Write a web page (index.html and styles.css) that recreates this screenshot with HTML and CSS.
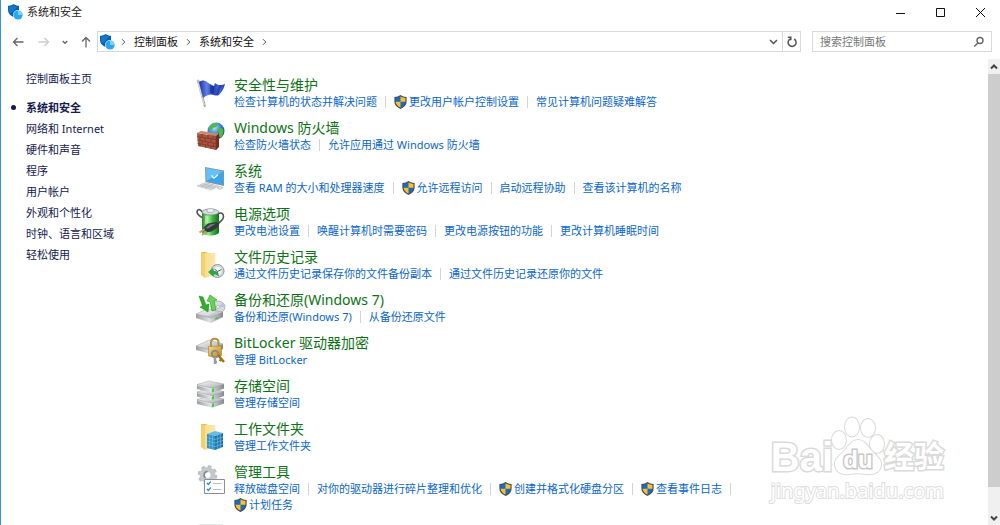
FILE: index.html
```html
<!DOCTYPE html>
<html lang="zh-CN">
<head>
<meta charset="utf-8">
<title>系统和安全</title>
<link rel="stylesheet" href="styles.css">
</head>
<body>
<svg class="defs" aria-hidden="true">
  <defs>
    <linearGradient id="gBlue" x1="0" y1="0" x2="1" y2="0"><stop offset="0" stop-color="#1c2fa0"/><stop offset=".3" stop-color="#5d80ea"/><stop offset=".55" stop-color="#2440b8"/><stop offset=".8" stop-color="#4a6fe0"/><stop offset="1" stop-color="#2337a0"/></linearGradient>
    <linearGradient id="gMetal" x1="0" y1="0" x2="1" y2="1"><stop offset="0" stop-color="#fafafa"/><stop offset=".5" stop-color="#d0d2d4"/><stop offset="1" stop-color="#a0a3a6"/></linearGradient>
    <linearGradient id="gSide" x1="0" y1="0" x2="1" y2="0"><stop offset="0" stop-color="#9c9fa2"/><stop offset=".5" stop-color="#dfe1e3"/><stop offset="1" stop-color="#85878a"/></linearGradient>
    <linearGradient id="gGreen" x1="0" y1="0" x2="1" y2="0"><stop offset="0" stop-color="#1e8a28"/><stop offset=".35" stop-color="#9bec8d"/><stop offset=".65" stop-color="#37b03e"/><stop offset="1" stop-color="#146d1d"/></linearGradient>
    <linearGradient id="gFolder" x1="0" y1="0" x2="1" y2="0"><stop offset="0" stop-color="#f9dc88"/><stop offset="1" stop-color="#fbe9b4"/></linearGradient>
    <linearGradient id="gGold" x1="0" y1="0" x2="1" y2="1"><stop offset="0" stop-color="#f6dc8a"/><stop offset="1" stop-color="#b98418"/></linearGradient>
    <radialGradient id="gGlobe" cx=".4" cy=".3" r=".7"><stop offset="0" stop-color="#b5e4ff"/><stop offset=".5" stop-color="#3a8ee0"/><stop offset="1" stop-color="#123f99"/></radialGradient>
    <symbol id="shield" viewBox="0 0 14 15">
      <path fill="#4a5056" d="M7 0C5 1.3 3 2 .4 2.1V7c0 3.7 2.6 6.3 6.6 8 4-1.7 6.600-4.300 6.600-8V2.100C11 2 9 1.300 7 0z"/>
      <path fill="#0f6fd0" d="M7 1.500C5.300 2.500 3.600 3 1.700 3.200v4.100H7zM7 7.300v6.200c3.100-1.400 5-3.400 5.300-6.200z"/>
      <path fill="#ffc02e" d="M7 1.500c1.700 1 3.400 1.500 5.300 1.700v4.100H7zM7 7.300v6.200c-3.100-1.400-5-3.400-5.300-6.200z"/>
    </symbol>
    <symbol id="security" viewBox="0 0 15 16">
      <path fill="#0a5fae" d="M5.500 0C4 1.200 2.200 1.700 0 1.800V6c0 3.200 2.200 5.600 5.500 7C8.800 11.600 11 9.200 11 6V1.800C8.800 1.700 7 1.200 5.500 0z"/>
      <path fill="#1676c9" d="M5.500 1.200C4.200 2.100 2.700 2.600 1 2.700V6c0 1.500.6 2.900 1.700 4L9.300 2.600C7.900 2.400 6.600 2 5.500 1.200z"/>
      <circle cx="10" cy="11" r="5" fill="#fff"/>
      <circle cx="10" cy="11" r="4.600" fill="#28a8ee"/>
      <path fill="#7bd0fa" d="M10 11V6.400a4.600 4.600 0 0 1 4.600 4.600z"/>
    </symbol>
    <symbol id="disk" viewBox="0 0 30 13">
      <path fill="url(#gSide)" d="M1 4.500v4.500l16 4 12-4.500V4z"/>
      <path fill="url(#gMetal)" stroke="#9a9da0" stroke-width=".5" d="M1 4.500 13 .8l16 3.200-12 4.500z"/>
      <path fill="#2fd02f" d="m16.500 9 2-.7v3.400l-2 .7z"/>
      <path stroke="#f5f5f5" stroke-width=".6" d="m1.500 5.300 15.500 4"/>
    </symbol>
  </defs>
</svg>

<div class="window">
  <header class="titlebar">
    <svg class="app-icon" aria-hidden="true"><use href="#security"/></svg>
    <h1 class="window-title">系统和安全</h1>
    <div class="window-controls">
      <button type="button" aria-label="最小化"><svg width="11" height="11"><path d="M1 6.500h9"/></svg></button>
      <button type="button" aria-label="最大化"><svg width="11" height="11"><path d="M1.500 1.500h8v8h-8z"/></svg></button>
      <button type="button" aria-label="关闭"><svg width="11" height="11"><path d="m1 1 9 9M10 1 1 10"/></svg></button>
    </div>
  </header>

  <nav class="toolbar" aria-label="地址栏">
    <div class="history">
      <button type="button" aria-label="后退"><svg width="12" height="12"><path d="M11.500 6H1.500M5.500 2l-4 4 4 4"/></svg></button>
      <button type="button" aria-label="前进" disabled><svg width="12" height="12"><path d="M.5 6h10M6.500 2l4 4-4 4"/></svg></button>
      <button type="button" class="recent" aria-label="最近的位置"><svg width="6" height="12"><path d="m.7 5 2.300 2.300L5.300 5"/></svg></button>
      <button type="button" aria-label="上移"><svg width="12" height="12"><path d="M6 11.500v-10M2 5.500l4-4 4 4"/></svg></button>
    </div>
    <div class="address">
      <svg class="app-icon" aria-hidden="true"><use href="#security"/></svg>
      <svg class="crumb-arrow" width="5" height="8"><path d="m1 1.200 2.800 2.800L1 6.800"/></svg>
      <a href="#">控制面板</a>
      <svg class="crumb-arrow" width="5" height="8"><path d="m1 1.200 2.800 2.800L1 6.800"/></svg>
      <a href="#">系统和安全</a>
      <svg class="crumb-arrow" width="5" height="8"><path d="m1 1.200 2.800 2.800L1 6.800"/></svg>
      <button type="button" class="drop" aria-label="以前的位置"><svg width="9" height="8"><path d="m1 2 3.500 3.500L8 2"/></svg></button>
      <button type="button" class="refresh" aria-label="刷新"><svg width="12" height="12"><path d="M8.200 3A4 4 0 1 1 4 3M1.800 1.300h3v3"/></svg></button>
    </div>
    <label class="search">
      <input type="text" placeholder="搜索控制面板" aria-label="搜索控制面板">
      <svg width="12" height="12"><circle cx="7" cy="4.500" r="3"/><path d="M4.900 6.900 1.200 10.600"/></svg>
    </label>
  </nav>

  <div class="body">
    <aside class="sidebar">
      <a class="home" href="#">控制面板主页</a>
      <ul>
        <li class="current"><a href="#">系统和安全</a></li>
        <li><a href="#">网络和 Internet</a></li>
        <li><a href="#">硬件和声音</a></li>
        <li><a href="#">程序</a></li>
        <li><a href="#">用户帐户</a></li>
        <li><a href="#">外观和个性化</a></li>
        <li><a href="#">时钟、语言和区域</a></li>
        <li><a href="#">轻松使用</a></li>
      </ul>
    </aside>

    <main class="content">
      <section class="item">
        <svg class="icon" viewBox="0 0 30 32" aria-hidden="true">
          <path stroke="#a7aaae" stroke-width="2.200" stroke-linecap="round" d="m2.300 5 6.500 24"/>
          <path stroke="#eceef0" stroke-width=".8" d="m2.200 6 6 22"/>
          <circle cx="2.200" cy="4" r="1.500" fill="#b9bcc0"/>
          <path fill="url(#gBlue)" d="M3 5c3-2 5-2 8 0s5 4 7 4l1-3c2 2 6 3 10 1-1 4-3 8-6 11-3 1.500-5-.5-8-.5s-5 1.500-8 3.500z"/>
          <path fill="#172783" opacity=".55" d="m14 7 4 2-1 8-3-1zM23 8l3 0-4 10h-2z"/>
        </svg>
        <div class="text">
          <h2><a href="#">安全性与维护</a></h2>
          <ul class="links">
            <li><a href="#">检查计算机的状态并解决问题</a></li>
            <li><a href="#"><svg class="shield"><use href="#shield"/></svg>更改用户帐户控制设置</a></li>
            <li><a href="#">常见计算机问题疑难解答</a></li>
          </ul>
        </div>
      </section>

      <section class="item">
        <svg class="icon" viewBox="0 0 30 32" aria-hidden="true">
          <circle cx="20" cy="11" r="8.500" fill="url(#gGlobe)"/>
          <path fill="#52b83e" d="M15 5c2-2 5-2 7-1l-2 3-3 1-2 3-2-2zM23 7l4 2c1 3 0 6-2 9l-3-3 1-3-2-2z"/>
          <path fill="#6e2d20" d="m20 15 3-2v14l-3 3z"/>
          <path fill="#a8543f" d="m1 13 19 3v14L2 26z"/>
          <path fill="#c98672" d="m1 13 4-2 18 2.500-3 2.500z"/>
          <path fill="none" stroke="#7c3728" stroke-width=".8" d="m1 16.500 19 3 3-2M1.500 20l18.500 3.500 3-2M1.700 23.300l18.300 3.700 3-2M6 14v3.200M12 15v3.200M17 15.800V19M4 17.200v3.200M9 18v3.300M15 19v3.500M6 21v3.200M12 22.200v3.300M17.500 23v3.500M4 24v2.500M9.500 25v2.700M15 26v3M20 16v14"/>
        </svg>
        <div class="text">
          <h2><a href="#">Windows 防火墙</a></h2>
          <ul class="links">
            <li><a href="#">检查防火墙状态</a></li>
            <li><a href="#">允许应用通过 Windows 防火墙</a></li>
          </ul>
        </div>
      </section>

      <section class="item">
        <svg class="icon" viewBox="0 0 30 32" aria-hidden="true">
          <path fill="#8d949a" d="m9 4 19 3.500V23L9.500 19z"/>
          <path fill="#39a5ea" d="m10 5 17.200 3.300v13.500L10.400 18z"/>
          <path fill="#64c0f5" d="m10 5 17.200 3.300L10.400 18z"/>
          <path fill="none" stroke="#fff" stroke-width="1.300" d="m15.500 12.500 2.500 2.700 4-3.700"/>
          <path fill="#d7dadd" stroke="#b3b8bc" stroke-width=".5" d="m1 23 8-3.500L23 23l-8 4z"/>
          <path fill="none" stroke="#adb2b6" stroke-width=".6" d="m4 22 14 3.500M7 21l13 3.400M5 24l8-3.700M9 25l8-3.700"/>
          <path fill="#e4e6e8" stroke="#9da3a8" stroke-width=".5" d="m21 25 3-1.500 3 1-3 2z"/>
        </svg>
        <div class="text">
          <h2><a href="#">系统</a></h2>
          <ul class="links">
            <li><a href="#">查看 RAM 的大小和处理器速度</a></li>
            <li><a href="#"><svg class="shield"><use href="#shield"/></svg>允许远程访问</a></li>
            <li><a href="#">启动远程协助</a></li>
            <li><a href="#">查看该计算机的名称</a></li>
          </ul>
        </div>
      </section>

      <section class="item">
        <svg class="icon" viewBox="0 0 30 32" aria-hidden="true">
          <path fill="none" stroke="#4c5256" stroke-width="1.600" d="M7 12C3 10 0 7 1.500 4.500S6 5 7 7M22 8c3-2 5.500-1 5.500 2.500S23 17 20 19"/>
          <path fill="url(#gGreen)" d="M6 6h17v20c0 2.200-4 3.500-8.500 3.500S6 28.200 6 26z"/>
          <ellipse cx="14.500" cy="6" rx="8.500" ry="3" fill="#d7dade" stroke="#7d8387" stroke-width=".7"/>
          <path fill="#f5f6f7" stroke="#8c9195" stroke-width=".6" d="M11 3.500v2c1 1 6 1 7 0v-2c-1-1-6-1-7 0z"/>
          <path fill="#c9eec0" opacity=".6" d="M9 9.500c1 .5 2 .7 3 .8V17l-3 1z"/>
          <path fill="#34383b" d="m7 22 5-4.500 8-1.500 3.500 1.500-2 4-6 4-5.500 1z"/>
          <path fill="#73797e" d="m9.500 22 4.500-3.500 6-1-8 5z"/>
          <path stroke="#bda366" stroke-width="1.800" d="m8.500 23-5 3.500M10.500 25.500l-4.500 3.500"/>
        </svg>
        <div class="text">
          <h2><a href="#">电源选项</a></h2>
          <ul class="links">
            <li><a href="#">更改电池设置</a></li>
            <li><a href="#">唤醒计算机时需要密码</a></li>
            <li><a href="#">更改电源按钮的功能</a></li>
            <li><a href="#">更改计算机睡眠时间</a></li>
          </ul>
        </div>
      </section>

      <section class="item">
        <svg class="icon" viewBox="0 0 30 32" aria-hidden="true">
          <path fill="#e5bd55" d="M5 3h5l2 1h7v22H8z"/>
          <path fill="url(#gFolder)" d="M8.500 4 19.500 4v22L8.500 29z"/>
          <path fill="#f4cf6d" d="m5 3 4 2v24l-4-3z"/>
          <circle cx="21.500" cy="22" r="6.500" fill="#dcdfe1" stroke="#8f9599"/>
          <circle cx="21.500" cy="22" r="4.800" fill="#f0f2f3" stroke="#b5babd" stroke-width=".5"/>
          <path fill="none" stroke="#5a6064" d="m18.500 20 3 2.500 4-2M21.500 22.500v2"/>
          <path fill="#2fa64a" d="m12 23 5-4 1 3c3 0 5 2 5 5.500-2-1.500-3.500-2-5-2l-.5 2.500z"/>
        </svg>
        <div class="text">
          <h2><a href="#">文件历史记录</a></h2>
          <ul class="links">
            <li><a href="#">通过文件历史记录保存你的文件备份副本</a></li>
            <li><a href="#">通过文件历史记录还原你的文件</a></li>
          </ul>
        </div>
      </section>

      <section class="item">
        <svg class="icon" viewBox="0 0 30 32" aria-hidden="true">
          <ellipse cx="22" cy="15" rx="7" ry="6" fill="#d8dadd" stroke="#999ea3" stroke-width=".7"/>
          <path fill="#b5c5e8" d="m22 15 5-4 2 4z"/>
          <circle cx="22" cy="15" r="1.500" fill="#fff" stroke="#888" stroke-width=".5"/>
          <path fill="url(#gSide)" d="M0 22v4l15 5 12-6v-5z"/>
          <path fill="url(#gMetal)" stroke="#979a9d" stroke-width=".5" d="m0 22 11-5 16 3-12 6z"/>
          <path fill="#dce0e2" d="m5 21.500 7-3 7 1.500-7 3.500z"/>
          <path stroke="#2bcf33" stroke-width="1.300" d="m19 27 3-1.200"/>
          <path fill="#2fae28" stroke="#178116" stroke-width=".5" d="m3 4 4 1 3 8 3-1-1 8-8-5 2.500-1z"/>
          <path fill="#64d652" stroke="#178116" stroke-width=".5" d="m11 9 3-6 7 5-3 .8 2 9-4 1-2-9z"/>
        </svg>
        <div class="text">
          <h2><a href="#">备份和还原(Windows 7)</a></h2>
          <ul class="links">
            <li><a href="#">备份和还原(Windows 7)</a></li>
            <li><a href="#">从备份还原文件</a></li>
          </ul>
        </div>
      </section>

      <section class="item">
        <svg class="icon" viewBox="0 0 30 32" aria-hidden="true">
          <path fill="url(#gSide)" d="M0 11v4l15 4 12-5V9z"/>
          <path fill="url(#gMetal)" stroke="#9a9da0" stroke-width=".5" d="m0 11 13-6 14 4-12 6z"/>
          <path fill="none" stroke="#b59243" stroke-width="2" d="M15 13V7.500c0-5 7.500-5 7.500 0V13"/>
          <path fill="url(#gGold)" stroke="#9b7018" stroke-width=".5" d="M12.500 11.500 25.500 11v9.500l-5 2-8-1.500z"/>
          <circle cx="19" cy="19" r="3.200" fill="none" stroke="#8f8c83" stroke-width="2"/>
          <path fill="none" stroke="#9a9d9f" stroke-width="2.400" d="M19 22v7M19 27h2"/>
          <path fill="none" stroke="#a0741f" stroke-width="2.600" d="m22 20 6 7M25.500 24l-1.800 2"/>
        </svg>
        <div class="text">
          <h2><a href="#">BitLocker 驱动器加密</a></h2>
          <ul class="links">
            <li><a href="#">管理 BitLocker</a></li>
          </ul>
        </div>
      </section>

      <section class="item">
        <svg class="icon" viewBox="0 0 30 32" aria-hidden="true">
          <use href="#disk" y="17" width="29" height="13"/>
          <use href="#disk" y="9.500" width="29" height="13"/>
          <use href="#disk" y="2" width="29" height="13"/>
        </svg>
        <div class="text">
          <h2><a href="#">存储空间</a></h2>
          <ul class="links">
            <li><a href="#">管理存储空间</a></li>
          </ul>
        </div>
      </section>

      <section class="item">
        <svg class="icon" viewBox="0 0 30 32" aria-hidden="true">
          <path fill="#e5bd55" d="M5 3h5l2 1h7v22H8z"/>
          <path fill="url(#gFolder)" d="M8.500 4 19.500 4v22L8.500 29z"/>
          <path fill="#f4cf6d" d="m5 3 4 2v24l-4-3z"/>
          <path fill="#64bde6" d="m11 13 8-3 8 2-8 3z"/>
          <path fill="#318fc5" d="m11 13 8 2v14l-8-2z"/>
          <path fill="#1f75ac" d="m19 15 8-3v14l-8 3z"/>
          <path fill="none" stroke="#7cc6ea" stroke-width=".6" d="m11 16.500 8 2 8-2.500M11 20l8 2 8-2.500M11 23.500l8 2 8-2.500M13.700 14v13.500M16.400 14.500v13.800M21.700 14v14M24.300 13v14"/>
        </svg>
        <div class="text">
          <h2><a href="#">工作文件夹</a></h2>
          <ul class="links">
            <li><a href="#">管理工作文件夹</a></li>
          </ul>
        </div>
      </section>

      <section class="item">
        <svg class="icon" viewBox="0 0 30 32" aria-hidden="true">
          <circle cx="11.500" cy="11" r="8.500" fill="none" stroke="#b9bec2" stroke-width="2.500" stroke-dasharray="3.700 2.975"/>
          <circle cx="11.500" cy="11" r="5.500" fill="none" stroke="#c4c8cc" stroke-width="5"/>
          <path fill="none" stroke="#7c8287" stroke-width="1.500" d="M11.500 7.500a3.500 3.500 0 0 0-2 6.300"/>
          <path fill="#fff" stroke="#8b8f93" d="M8.500 15.500h20v14h-20z"/>
          <path fill="none" stroke="#2589d8" stroke-width="1.200" d="m11 19 1.300 1.500 2.500-3M11 25l1.300 1.500 2.500-3"/>
          <path stroke="#b9bdc0" d="M17 19.500h8.500M17 25.500h8.500"/>
        </svg>
        <div class="text">
          <h2><a href="#">管理工具</a></h2>
          <ul class="links">
            <li><a href="#">释放磁盘空间</a></li>
            <li><a href="#">对你的驱动器进行碎片整理和优化</a></li>
            <li><a href="#"><svg class="shield"><use href="#shield"/></svg>创建并格式化硬盘分区</a></li>
            <li><a href="#"><svg class="shield"><use href="#shield"/></svg>查看事件日志</a></li>
            <li><a href="#"><svg class="shield"><use href="#shield"/></svg>计划任务</a></li>
          </ul>
        </div>
      </section>

      <section class="item">
        <svg class="icon" viewBox="0 0 30 32" aria-hidden="true">
          <path fill="#e8eaeb" d="M2 1h25v28H2z"/>
        </svg>
      </section>
    </main>

    <div class="scrollbar">
      <button type="button" aria-label="向上滚动"><svg width="8" height="8"><path d="M1 5.500 4 2.500l3 3"/></svg></button>
      <div class="thumb"></div>
      <div class="track"></div>
      <button type="button" aria-label="向下滚动"><svg width="8" height="8"><path d="m1 2.500 3 3 3-3"/></svg></button>
    </div>
  </div>

  <div class="watermark">
    <div class="brand">
      <span class="bai">Bai</span>
      <span class="paw">
        <svg viewBox="0 0 54 60" aria-hidden="true">
          <ellipse cx="8" cy="24" rx="7" ry="9"/>
          <ellipse cx="21" cy="11" rx="7" ry="9.500"/>
          <ellipse cx="37" cy="12" rx="7" ry="9"/>
          <ellipse cx="46" cy="28" rx="7" ry="9"/>
          <path d="M27 24c-6 0-9 5-13 10S3 43 4 49c1 8 8 10 15 9 5-1 11-1 16 0 7 1 14-1 15-9 1-6-6-10-10-15s-7-10-13-10z"/>
        </svg>
        <span class="du">du</span>
      </span>
      <span class="jy">经验</span>
    </div>
    <div class="site">jingyan.baidu.com</div>
  </div>
</div>
</body>
</html>
```
FILE: styles.css
```css
* { box-sizing: border-box; }

body {
  margin: 0;
  background: #fff;
  color: #222;
  font: 11px/16px "Noto Sans", "Noto Sans CJK SC", sans-serif;
}

h1, h2, ul { margin: 0; padding: 0; font-weight: 400; list-style: none; }
a { color: inherit; text-decoration: none; }
button {
  display: flex;
  align-items: center;
  justify-content: center;
  padding: 0;
  border: 0;
  background: none;
  color: inherit;
}
svg { display: block; flex: none; }
button svg, .crumb-arrow, .search svg { fill: none; stroke: currentColor; }

.defs { position: absolute; width: 0; height: 0; }

.window {
  position: relative;
  display: flex;
  flex-direction: column;
  height: 100vh;
  overflow: hidden;
  border-left: 1px solid #3a94dc;
}

.titlebar { display: flex; align-items: center; height: 24px; padding-left: 7px; gap: 4px; }
.app-icon { width: 15px; height: 16px; }
.window-title { font-size: 11px; }
.window-controls { display: flex; margin-left: auto; color: #111; }
.window-controls button { width: 40px; height: 24px; }

.toolbar { display: flex; align-items: center; padding: 7px 8px 7px 11px; gap: 11px; }
.history { display: flex; align-items: center; gap: 14px; color: #666; }
.history button:disabled { color: #ccc; }
.history .recent { margin: 0 -2px; }
.history svg { stroke-width: 1.3; }

.address {
  display: flex;
  flex: 1;
  align-items: center;
  height: 21px;
  margin-left: -6px;
  padding-left: 2px;
  border: 1px solid #d9d9d9;
  color: #111;
}
.crumb-arrow { margin: 0 8px; color: #555; }
.address .app-icon + .crumb-arrow { margin-left: 6px; }
.drop { width: 18px; margin-left: auto; color: #555; }
.refresh { align-self: stretch; width: 18px; border-left: 1px solid #d9d9d9; color: #555; }
.drop svg, .refresh svg { stroke-width: 1.5; }

.search {
  display: flex;
  align-items: center;
  width: 180px;
  height: 21px;
  padding: 0 6px 0 7px;
  border: 1px solid #d9d9d9;
  color: #666;
}
.search input {
  flex: 1;
  min-width: 0;
  padding: 0;
  border: 0;
  outline: 0;
  background: none;
  font: inherit;
}
.search input::placeholder { color: #777; opacity: 1; }
.search svg { stroke-width: 1.4; }

.body { display: flex; flex: 1; min-height: 0; }

.sidebar {
  width: 195px;
  flex: none;
  padding: 9px 0 0 10px;
  color: #14194f;
  line-height: 21px;
}
.home { display: block; margin: 0 0 8px 15px; }
.sidebar li { display: flex; align-items: center; gap: 10px; }
.sidebar li::before { content: ""; width: 5px; height: 5px; border-radius: 50%; }
.sidebar .current { font-weight: 700; }
.sidebar .current::before { background: #14194f; }

.content { flex: 1; min-width: 0; overflow: hidden; padding-top: 17px; }
.item { display: flex; gap: 8px; padding-bottom: 9px; }
.icon { width: 30px; height: 32px; margin-top: 1px; fill: none; }
.text { max-width: 520px; }
.item h2 { color: #0d7215; font-size: 14px; line-height: 18px; }
.links { display: flex; flex-wrap: wrap; color: #0a66cc; line-height: 16px; }
.links li { display: flex; align-items: center; }
.links li:not(:last-child)::after {
  content: "";
  width: 1px;
  height: 12px;
  margin: 0 8px;
  background: #d4d4d4;
}
.links a { display: flex; align-items: center; gap: 2px; }
.shield { width: 13px; height: 14px; }

.scrollbar {
  display: flex;
  flex-direction: column;
  width: 12px;
  background: #f0f0f0;
  color: #444;
}
.scrollbar button { height: 15px; }
.scrollbar svg { stroke-width: 2; }
.thumb { flex: 413; background: #cdcdcd; }
.track { flex: 23; }

.watermark {
  position: absolute;
  right: 56px;
  bottom: 22px;
  color: #fff;
  font-family: "Liberation Sans", "Noto Sans CJK SC", sans-serif;
  font-weight: 700;
  -webkit-text-stroke: 3px #dadada;
  paint-order: stroke fill;
  pointer-events: none;
}
.brand { display: flex; align-items: flex-end; }
.bai { font-size: 40px; line-height: 44px; }
.paw { position: relative; width: 54px; margin: 0 -1px 3px -2px; }
.paw svg { width: 54px; height: 60px; fill: #fff; stroke: #dadada; stroke-width: 2; }
.du {
  position: absolute;
  inset: auto 0 4px;
  font-size: 24px;
  line-height: 24px;
  text-align: center;
  -webkit-text-stroke: 3px #c8c8c8;
}
.jy { font-size: 30px; line-height: 44px; }
.site {
  font: 20px/24px "Noto Sans", sans-serif;
  -webkit-text-stroke: 2px #dedede;
}
```
